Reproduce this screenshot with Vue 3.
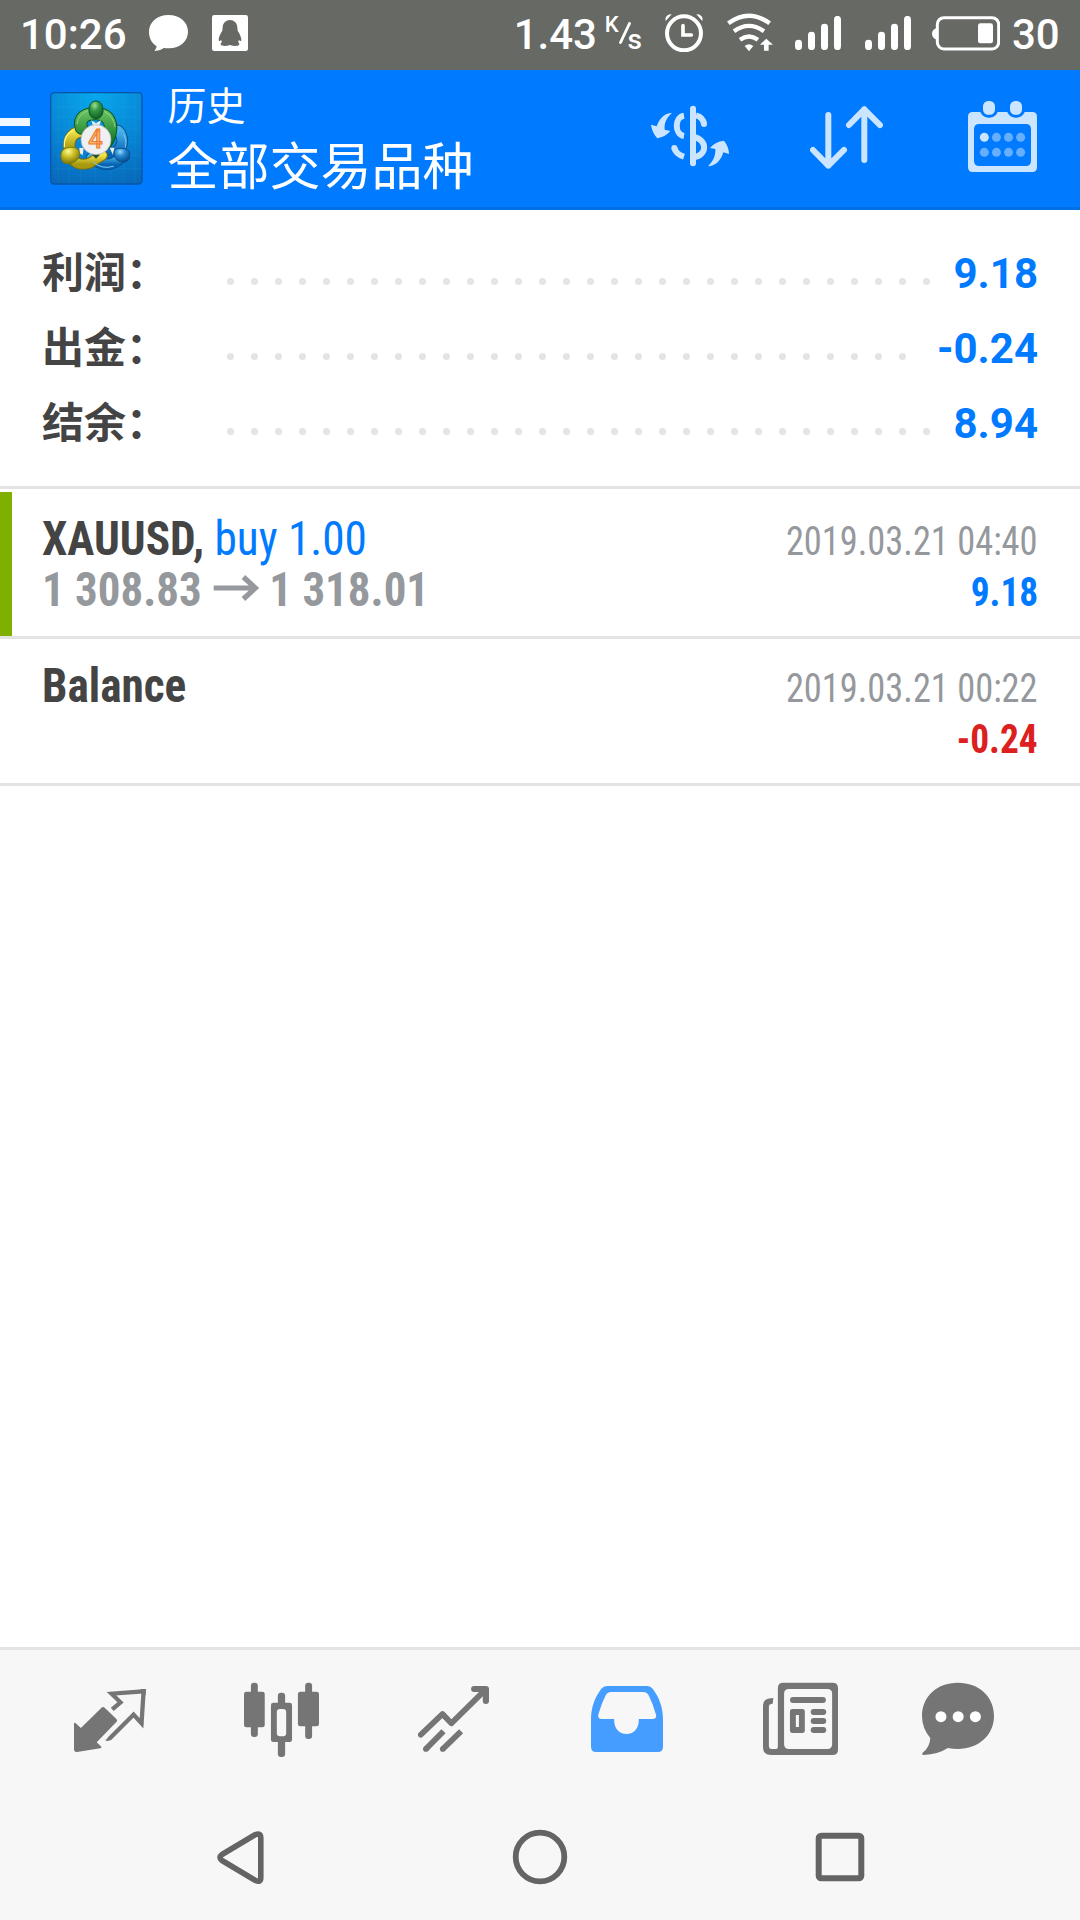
<script setup>
const totals = [
  { label: '利润：', value: '9.18', dots: 30 },
  { label: '出金：', value: '-0.24', dots: 29 },
  { label: '结余：', value: '8.94', dots: 30 },
]
const calendarDots = [0, 1, 2, 3, 4, 5, 6, 7]
</script>

<template>
  <div class="screen">
    <div class="status">
      <span class="clock">10:26</span>
      <svg class="bubble" viewBox="447 45 117 108">
        <path fill="#fff" d="M505 45C540 45 564 67 564 95S540 146 505 145C500 145 495 144 491 144C482 151 474 153 464 152C463 151 468 149 470 139C455 129 447 114 447 95C447 67 472 45 505 45Z" />
      </svg>
      <svg class="qq" viewBox="636 45 108 108">
        <rect x="636" y="45" width="108" height="108" rx="7" fill="#fff" />
        <path fill="#676965" d="M690 60C702 60 711 69 712 82L713 92C719 101 724 112 724 119C724 124 721 125 717 120L714 126C718 129 719 132 717 135C712 139 700 138 690 135C680 138 668 139 663 135C661 132 662 129 666 126L663 120C659 125 656 124 656 119C656 112 661 101 667 92L668 82C669 69 678 60 690 60Z" />
      </svg>
      <div class="status-right">
        <span class="speed">1.43</span>
        <span class="unit"><span class="k">K</span><svg viewBox="0 0 12 22"><path d="M1.500 20.500L10.500 1.500" stroke="#fff" stroke-width="2.900" stroke-linecap="round" /></svg><span class="s">s</span></span>
        <svg class="alarm" viewBox="495 41 114 115">
          <circle cx="552" cy="99" r="51" fill="none" stroke="#fff" stroke-width="12" />
          <path d="M549 76V104H574" fill="none" stroke="#fff" stroke-width="11" stroke-linecap="round" />
          <path fill="#fff" d="M497 62C494 50 503 41 515 42ZM607 62C611 50 601 41 589 42Z" />
        </svg>
        <svg class="wifi" viewBox="681 40 139 116">
          <g fill="none" stroke="#fff" stroke-width="13">
            <path d="M685 71Q747 25 809 71" />
            <path d="M702 95Q747 62 792 95" />
            <path d="M720 120Q747 101 774 120" />
          </g>
          <path fill="#fff" d="M734 139Q747 129 760 139L747 155ZM799 117L819 135H806V153H792V135H780Z" />
        </svg>
        <svg v-for="n in 2" :key="n" class="signal" viewBox="45 48 138 103">
          <path d="M55.500 130V140M94.500 106V140M133.500 82V140M172.500 58V140" stroke="#fff" stroke-width="21" stroke-linecap="round" />
        </svg>
        <svg class="battery" viewBox="456 47 204 105">
          <rect x="472" y="52" width="184" height="94" rx="20" fill="none" stroke="#fff" stroke-width="9" />
          <path fill="#fff" d="M470 83Q456 88 456 100T470 118Z" />
          <rect x="594" y="69" width="45" height="60" rx="7" fill="#fff" />
        </svg>
        <span class="percent">30</span>
      </div>
    </div>

    <header class="header">
      <div class="menu"><i /><i /><i /></div>
      <svg class="logo" viewBox="149 275 279 279">
        <defs>
          <radialGradient id="bg" cx=".5" cy="0" r="1.05">
            <stop offset="0" stop-color="#08a9ec" /><stop offset=".55" stop-color="#0787d6" /><stop offset="1" stop-color="#0869bb" />
          </radialGradient>
          <linearGradient id="green" x1="0" y1="0" x2="0" y2="1"><stop offset="0" stop-color="#62bd5c" /><stop offset="1" stop-color="#12742a" /></linearGradient>
          <linearGradient id="yellow" x1="0" y1="0" x2="0" y2="1"><stop offset="0" stop-color="#f2e34a" /><stop offset="1" stop-color="#a79a0e" /></linearGradient>
          <linearGradient id="blue" x1="0" y1="0" x2="0" y2="1"><stop offset="0" stop-color="#48b4ec" /><stop offset="1" stop-color="#0763b4" /></linearGradient>
          <radialGradient id="gball" cx=".4" cy=".25" r=".8"><stop offset="0" stop-color="#9ddf92" /><stop offset=".4" stop-color="#349844" /><stop offset="1" stop-color="#0b5c25" /></radialGradient>
          <radialGradient id="yball" cx=".4" cy=".25" r=".8"><stop offset="0" stop-color="#fff99b" /><stop offset=".4" stop-color="#cfc327" /><stop offset="1" stop-color="#716b05" /></radialGradient>
          <radialGradient id="bball" cx=".4" cy=".25" r=".8"><stop offset="0" stop-color="#9ad9f8" /><stop offset=".4" stop-color="#2488d1" /><stop offset="1" stop-color="#044686" /></radialGradient>
        </defs>
        <rect x="151" y="277" width="274" height="274" rx="11" fill="url(#bg)" stroke="#0755a8" stroke-width="4" />
        <g stroke="#45bff0" stroke-width="1.500" opacity=".2">
          <path d="M173 282V546M207 282V546M241 282V546M286 282V546M330 282V546M370 282V546M404 282V546M155 320H421M155 350H421M155 386H421M155 425H421M155 465H421M155 505H421" />
        </g>
        <g fill="none" stroke-linecap="round">
          <path d="M315 461C342 464 365 448 366 421Q365 402 353 391" stroke="#085193" stroke-width="35" />
          <path d="M315 461C342 464 365 448 366 421Q365 402 353 391" stroke="url(#blue)" stroke-width="29" />
          <path d="M274 473Q302 496 330 491Q350 487 363 469" stroke="#085193" stroke-width="35" />
          <path d="M274 473Q302 496 330 491Q350 487 363 469" stroke="url(#blue)" stroke-width="29" />
          <path d="M250 393C220 392 204 412 207 445" stroke="#746f0b" stroke-width="37" />
          <path d="M250 393C220 392 204 412 207 445" stroke="url(#yellow)" stroke-width="31" />
          <path d="M214 474Q232 500 269 488L306 465" stroke="#746f0b" stroke-width="33" />
          <path d="M214 474Q232 500 269 488L306 465" stroke="url(#yellow)" stroke-width="27" />
          <path d="M243 383C234 352 256 339 287 340C316 340 331 356 331 384Q330 407 318 426" stroke="#0a5925" stroke-width="40" />
          <path d="M243 383C234 352 256 339 287 340C316 340 331 356 331 384Q330 407 318 426" stroke="url(#green)" stroke-width="34" />
          <path d="M230 370Q234 340 263 331M313 334Q340 347 344 379" stroke="#9edc8f" stroke-width="3" opacity=".8" />
          <path d="M192 439Q189 405 217 390" stroke="#fff383" stroke-width="4" />
          <path d="M280 487Q306 508 339 498M375 441Q381 417 370 403" stroke="#81cdf6" stroke-width="3" />
        </g>
        <path fill="#eee" d="M273 360L287 369L302 360L297 376H278ZM237 442L250 443L247 465L238 458ZM328 442H342L338 464Z" />
        <path fill="#234f3a" d="M276 464L288 447L298 464L287 475Z" />
        <path fill="url(#gball)" stroke="#0b5424" stroke-width="3" d="M287 302C299 302 308 313 308 329C308 346 299 355 287 355S266 346 266 329C266 313 275 302 287 302Z" />
        <path fill="url(#yball)" stroke="#807907" stroke-width="3" d="M182 468C180 448 196 441 214 441C230 441 239 449 237 463C235 480 218 491 201 490C187 489 183 482 182 468Z" />
        <path fill="url(#bball)" stroke="#07508e" stroke-width="3" d="M341 461C339 449 347 444 360 444C380 443 389 451 388 466C388 479 379 487 365 485C352 483 343 475 341 461Z" />
        <circle cx="287" cy="418" r="45" fill="#f0eff2" stroke="#aeb0b5" stroke-width="2" />
        <text x="285" y="443" text-anchor="middle" font-family="Roboto, sans-serif" font-size="76" font-weight="500" fill="#fbb478" stroke="#ef7c28" stroke-width="3">4</text>
      </svg>
      <div class="titles">
        <div class="sub">历史</div>
        <div class="title">全部交易品种</div>
      </div>
      <div class="actions">
        <svg class="currency" viewBox="93 75 234 186">
          <path d="M219 86V250" stroke="#cce5ff" stroke-width="18" stroke-linecap="round" />
          <g fill="none" stroke="#cce5ff" stroke-width="18">
            <path d="M192 107C163 111 163 163 192 168M228 106Q249 111 252 132" />
            <path d="M219 171C264 177 263 228 219 232M192 230Q168 223 163 204" />
          </g>
          <circle cx="252" cy="132" r="9" fill="#cce5ff" /><circle cx="163" cy="204" r="9" fill="#cce5ff" />
          <path fill="#cce5ff" d="M156 98C140 113 132 128 134 149L151 153Q136 171 112 175C102 164 95 150 93 134L110 139C117 116 133 100 156 98ZM264 259C280 242 287 228 286 207L270 204Q286 184 312 182C321 193 327 208 327 222L310 217C303 241 288 258 264 259Z" />
        </svg>
        <svg class="sort" viewBox="569 75 220 195">
          <path fill="none" stroke="#cce5ff" stroke-width="18" stroke-linecap="round" stroke-linejoin="round" d="M624 105V257M578 210L624 257L671 210M732 240V88M686 135L732 88L779 135" />
        </svg>
        <svg class="calendar" viewBox="1044 60 207 219">
          <path fill="#cce5ff" fill-rule="evenodd" d="M1058 96H1237Q1251 96 1251 110V262Q1251 276 1237 276H1058Q1044 276 1044 262V110Q1044 96 1058 96ZM1078 132Q1062 132 1062 148V242Q1062 258 1078 258H1217Q1233 258 1233 242V148Q1233 132 1217 132Z" />
          <g fill="#cce5ff" stroke="#007aff" stroke-width="9"><rect x="1084.500" y="58.500" width="45" height="50" rx="20" /><rect x="1165.500" y="58.500" width="45" height="50" rx="20" /></g>
          <circle v-for="n in calendarDots" :key="n" :cx="1093 + (n % 4) * 36.3" :cy="n < 4 ? 172 : 217" r="13.500" :fill="n ? '#66afff' : '#cce5ff'" />
        </svg>
      </div>
    </header>

    <section class="totals">
      <div v-for="t in totals" :key="t.label" class="total">
        <span class="label">{{ t.label }}</span>
        <span class="dots"><i v-for="n in t.dots" :key="n" /></span>
        <span class="value">{{ t.value }}</span>
      </div>
    </section>

    <section class="deals">
      <article class="deal win">
        <div class="line">
          <span class="name"><b>XAUUSD,</b> <span class="buy">buy 1.00</span></span>
          <span class="date">2019.03.21 04:40</span>
        </div>
        <div class="line">
          <span class="prices">1 308.83<svg class="arrow" viewBox="0 0 46 26" preserveAspectRatio="none"><path d="M0 13H43M30 2L42 13L30 24" fill="none" stroke="#95989c" stroke-width="5.200" /></svg>1 318.01</span>
          <span class="amount">9.18</span>
        </div>
      </article>
      <article class="deal">
        <div class="line">
          <b class="name">Balance</b>
          <span class="date">2019.03.21 00:22</span>
        </div>
        <div class="line">
          <span class="amount loss">-0.24</span>
        </div>
      </article>
    </section>

    <nav class="tabs">
      <svg class="t1" preserveAspectRatio="none" viewBox="215 120 209 240">
        <path fill="#757575" d="M215 250Q216 247 220 250L235 264L294 204Q299 198 304 203L338 237Q343 241 338 246L281 307L293 319Q297 324 291 325L224 336Q215 337 215 327Z" />
        <path fill="none" stroke="#757575" stroke-width="12.500" d="M326 208L350 187L324 161L417 154L411 250L388 224L317 297" />
        <path fill="#757575" d="M408 147H424L423 165L411 160ZM318 160Q317 155 325 155L333 160L328 170ZM405 245L417 250Q416 259 409 256ZM306 301L316 291L328 292L320 300Q313 306 306 301Z" />
      </svg>
      <svg class="t2" preserveAspectRatio="none" viewBox="709 120 217 240">
        <g fill="#757575">
          <rect x="729" y="128" width="20" height="163" rx="9" /><rect x="709" y="155" width="60" height="107" rx="7" />
          <rect x="886" y="128" width="20" height="169" rx="9" /><rect x="865" y="155" width="61" height="104" rx="7" />
          <rect x="807" y="158" width="21" height="193" rx="9" /><rect x="787" y="188" width="61" height="118" rx="7" />
        </g>
        <rect x="804" y="207" width="27" height="82" rx="9" fill="#f7f7f7" />
      </svg>
      <svg class="t3" preserveAspectRatio="none" viewBox="1214 120 206 240">
        <g fill="none" stroke="#757575" stroke-width="17" stroke-linejoin="round">
          <path stroke-linecap="round" d="M1222 284L1285 222L1311 250L1408 151" />
          <path stroke-linecap="round" stroke-width="18" d="M1377 147H1411V183" />
          <path d="M1288 274L1237 327M1339 274L1286 327" />
        </g>
        <circle cx="1237" cy="327" r="8.500" fill="#757575" /><circle cx="1286" cy="327" r="8.500" fill="#757575" />
      </svg>
      <svg class="t4" preserveAspectRatio="none" viewBox="148 120 209 240">
        <path fill="#449dff" fill-rule="evenodd" d="M195 138H312Q321 138 327 146C348 175 357 205 357 239V320Q357 336 342 336H163Q148 336 148 320V239C148 205 157 175 178 146Q184 138 195 138ZM207 156Q196 156 191 165Q178 191 169 224Q167 236 179 237H215C215 266 229 282 251 282S287 266 287 237H326Q339 237 337 225Q328 191 315 165Q310 156 299 156Z" />
      </svg>
      <svg class="t5" preserveAspectRatio="none" viewBox="648 120 217 240">
        <path fill="#757575" fill-rule="evenodd" d="M707 128H849Q865 128 865 144V329Q865 345 849 345H671Q648 345 648 322V196Q648 174 678 174L676 191Q665 191 665 200V317Q665 327 675 327H686Q691 327 691 320V144Q691 128 707 128ZM723 147Q709 147 709 161V313Q709 327 723 327H834Q848 327 848 313V161Q848 147 834 147Z" />
        <path fill="none" stroke="#757575" stroke-width="18" stroke-linecap="round" d="M735 180H821M795 216H822M795 243H822M795 270H822" />
        <path fill="#757575" fill-rule="evenodd" d="M733 207H762Q769 207 769 214V272Q769 279 762 279H733Q726 279 726 272V214Q726 207 733 207ZM743 225V261H752V225Z" />
      </svg>
      <svg class="t6" preserveAspectRatio="none" viewBox="1109 120 209 240">
        <path fill="#757575" d="M1213 128C1275 128 1318 170 1318 228S1272 327 1213 327Q1198 327 1184 324Q1156 343 1114 345Q1107 344 1111 338Q1132 322 1133 294Q1109 264 1109 228C1109 170 1152 128 1213 128Z" />
        <g fill="#fff"><ellipse cx="1164" cy="230" rx="16" ry="16.500" /><ellipse cx="1214" cy="230" rx="16" ry="16.500" /><ellipse cx="1264" cy="230" rx="16" ry="16.500" /></g>
      </svg>
    </nav>

    <div class="softkeys">
      <svg viewBox="0 0 60 60"><path d="M12 27.500L45.500 7.500Q50.800 5.500 50.800 11V50.500Q50.800 56 45.500 53.500L12 33.500Q8 30.500 12 27.500Z" fill="none" stroke="#646464" stroke-width="5.600" stroke-linejoin="round" /></svg>
      <svg viewBox="0 0 60 60"><circle cx="30" cy="30" r="24.300" fill="none" stroke="#646464" stroke-width="5.800" /></svg>
      <svg viewBox="0 0 60 60"><rect x="8.700" y="8.700" width="42.600" height="42.600" rx="2.500" fill="none" stroke="#646464" stroke-width="6" /></svg>
    </div>
  </div>
</template>

<style>
body { margin: 0; background: #fff; }
</style>

<style scoped>
.screen { width: 1080px; height: 1920px; display: flex; flex-direction: column; background: #fff; overflow: hidden; font-family: Roboto, "Noto Sans CJK SC", sans-serif; }
svg { display: block; flex: none; }

.status { height: 70px; flex: none; display: flex; align-items: flex-start; background: #676965; color: #fff; font-size: 42px; font-weight: 500; line-height: 70px; padding-left: 20px; box-sizing: border-box; white-space: nowrap; }
.clock { width: 129px; }
.bubble { width: 39px; height: 36px; margin-top: 15px; }
.qq { width: 36px; height: 36px; margin: 15px 0 0 24px; }
.status-right { margin-left: auto; display: flex; align-items: flex-start; }
.speed { width: 91px; }
.unit { width: 60px; height: 70px; display: flex; align-items: flex-start; font-size: 22px; }
.unit svg { width: 12px; height: 22px; margin: 22px 0 0 0; }
.k { line-height: 50px; }
.s { line-height: 79px; font-size: 28px; margin-left: -3px; }
.alarm { width: 38px; height: 38.300px; margin-top: 13.700px; }
.wifi { width: 46.300px; height: 38.700px; margin: 13.300px 22px 0 24px; }
.signal { width: 46px; height: 34.300px; margin: 16px 24px 0 0; }
.battery { width: 68px; height: 35px; margin: 15.700px 12px 0 -3px; }
.percent { width: 68px; }

.header { height: 140px; flex: none; box-sizing: border-box; display: flex; align-items: flex-start; background: #007aff; border-bottom: 3px solid #0070e6; }
.menu { width: 30px; padding-top: 48px; display: flex; flex-direction: column; gap: 10px; }
.menu i { height: 8px; background: #f0f7ff; }
.logo { width: 93px; height: 93px; margin: 21.500px 25px 0 19.500px; }
.titles { color: #fff; font-family: "Noto Sans CJK SC", sans-serif; white-space: nowrap; }
.sub { font-size: 39px; line-height: 52px; padding-top: 7px; }
.title { font-size: 51px; line-height: 68px; }
.actions { margin-left: auto; display: flex; padding-right: 43px; }
.currency { width: 78px; height: 62px; margin-top: 35px; }
.sort { width: 73.300px; height: 65px; margin: 35px 85px 0 80.700px; }
.calendar { width: 69px; height: 73px; margin-top: 30px; }

.totals { padding: 26px 42px 25px; border-bottom: 3px solid #e4e4e4; }
.total { height: 75px; display: flex; line-height: 75px; font-size: 42px; font-weight: 700; }
.label { width: 184.500px; color: #444; font-family: "Noto Sans CJK SC", sans-serif; line-height: 67px; }
.dots { display: flex; gap: 17px; padding-top: 42px; flex: 1; }
.dots i { width: 7px; height: 7px; border-radius: 50%; background: #e4e4e4; }
.value { color: #007aff; }

.deals { padding-top: 3px; font-family: "Roboto Condensed", Roboto, sans-serif; font-stretch: 75%; }
.deal { height: 147px; box-sizing: border-box; padding: 21px 42px 0; border-bottom: 3px solid #e4e4e4; position: relative; }
.win::before { content: ""; position: absolute; left: 0; top: 0; width: 12px; height: 144px; background: #7fb000; }
.line { height: 51px; line-height: 51px; font-size: 48px; display: flex; justify-content: space-between; align-items: baseline; color: #444; white-space: nowrap; }
.name { transform: scaleX(.943); transform-origin: left; }
.buy { color: #007aff; }
.prices { color: #95989c; font-weight: 700; transform: scaleX(.937); transform-origin: left; }
.arrow { display: inline-block; width: 49px; height: 26px; margin: 0 10.500px 0 12.500px; vertical-align: 5px; }
.date { font-size: 40px; color: #95989c; transform: scaleX(.91); transform-origin: right; }
.amount { margin-left: auto; font-size: 40px; font-weight: 700; color: #007aff; transform: scaleX(.935); transform-origin: right; }
.loss { color: #dc2020; line-height: 57px; }

.tabs { margin-top: auto; height: 153px; flex: none; box-sizing: border-box; border-top: 3px solid #e4e4e4; background: #f7f7f7; display: flex; padding-top: 30px; }
.tabs svg { height: 80px; }
.t1 { width: 72px; margin-left: 74px; }
.t2 { width: 75px; margin-left: 98px; }
.t3 { width: 71px; margin-left: 99px; }
.t4 { width: 72px; margin-left: 102px; }
.t5 { width: 75px; margin-left: 100px; }
.t6 { width: 72px; margin-left: 84px; }

.softkeys { height: 120px; flex: none; background: #f7f7f7; display: flex; justify-content: center; gap: 240px; padding-top: 27px; box-sizing: border-box; }
.softkeys svg { width: 60px; height: 60px; }
</style>
